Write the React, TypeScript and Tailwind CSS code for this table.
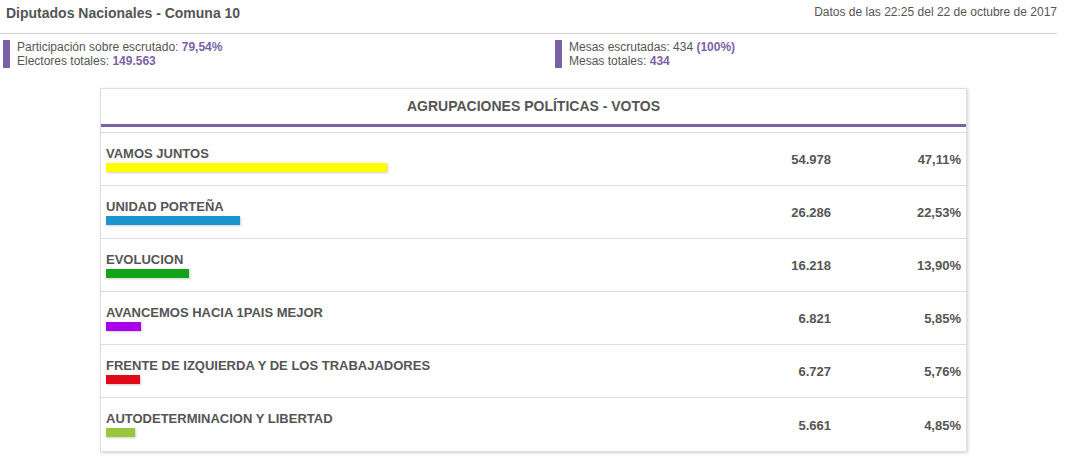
const parties = [
  { name: "VAMOS JUNTOS", votes: "54.978", pct: "47,11%", value: 47.11, color: "bg-[#ffff00]" },
  { name: "UNIDAD PORTEÑA", votes: "26.286", pct: "22,53%", value: 22.53, color: "bg-[#1b95d0]" },
  { name: "EVOLUCION", votes: "16.218", pct: "13,90%", value: 13.9, color: "bg-[#10a416]" },
  { name: "AVANCEMOS HACIA 1PAIS MEJOR", votes: "6.821", pct: "5,85%", value: 5.85, color: "bg-[#a800ea]" },
  { name: "FRENTE DE IZQUIERDA Y DE LOS TRABAJADORES", votes: "6.727", pct: "5,76%", value: 5.76, color: "bg-[#e00a18]" },
  { name: "AUTODETERMINACION Y LIBERTAD", votes: "5.661", pct: "4,85%", value: 4.85, color: "bg-[#9bc63b]" },
];

function Stat({ lines }: { lines: { label: string; value: React.ReactNode }[] }) {
  return (
    <div className="flex items-stretch gap-[7px]">
      <div className="w-[7px] bg-[#7b62a8]" />
      <div className="text-[12px] leading-[14px] text-[#555]">
        {lines.map((l, i) => (
          <div key={i}>
            {l.label} {l.value}
          </div>
        ))}
      </div>
    </div>
  );
}

export default function App() {
  return (
    <div className="w-[1081px] h-[461px] bg-white font-['Liberation_Sans',Arial,sans-serif] text-[#555] overflow-hidden">
      {/* CABECERA */}
      <div className="w-[1057px] h-[34px] flex justify-between items-start border-b border-[#cfcfcf]">
        <h1 className="pl-[6px] pt-[5px] text-[14px] leading-[16px] font-bold text-[#555]">
          Diputados Nacionales - Comuna 10
        </h1>
        <span className="pt-[5px] text-[12px] leading-[14px] text-[#555]">
          Datos de las 22:25 del 22 de octubre de 2017
        </span>
      </div>

      {/* DATOS GENERALES */}
      <div className="flex pt-[6px] pl-[3px]">
        <div className="w-[552px]">
          <Stat
            lines={[
              { label: "Participación sobre escrutado:", value: <b className="text-[#7b62a8]">79,54%</b> },
              { label: "Electores totales:", value: <b className="text-[#7b62a8]">149.563</b> },
            ]}
          />
        </div>
        <Stat
          lines={[
            { label: "Mesas escrutadas:", value: <>434 <b className="text-[#7b62a8]">(100%)</b></> },
            { label: "Mesas totales:", value: <b className="text-[#7b62a8]">434</b> },
          ]}
        />
      </div>

      {/* TABLA */}
      <div className="ml-[100px] mt-[20px] w-[867px] border border-[#dedede] shadow-[1px_1px_3px_rgba(0,0,0,0.18)]">
        <div className="h-[35px] flex items-center justify-center text-[14px] font-bold text-[#555]">
          AGRUPACIONES POLÍTICAS - VOTOS
        </div>
        <div className="h-[3px] bg-[#7b62a8]" />
        <div className="h-[5px]" />
        <div className="border-t border-[#ddd]">
          {parties.map((p, i) => (
            <div
              key={p.name}
              className={
                i < parties.length - 1
                  ? "grid grid-cols-[1fr_124px_130px] h-[53px] border-b border-[#ddd] pr-[5px]"
                  : "grid grid-cols-[1fr_124px_130px] h-[53px] pr-[5px]"
              }
            >
              <div className="pl-[5px] pt-[13px]">
                <div className="text-[13px] leading-[15px] font-bold text-[#555]">{p.name}</div>
                <div
                  className={`mt-[2px] h-[9px] ${p.color} shadow-[1px_1px_2px_rgba(0,0,0,0.2)]`}
                  style={{ width: `${p.value * 5.965}px` }}
                />
              </div>
              <div className="flex items-center justify-end pt-[2px] text-[13px] font-bold text-[#555]">{p.votes}</div>
              <div className="flex items-center justify-end pt-[2px] text-[13px] font-bold text-[#555]">{p.pct}</div>
            </div>
          ))}
        </div>
      </div>
    </div>
  );
}
